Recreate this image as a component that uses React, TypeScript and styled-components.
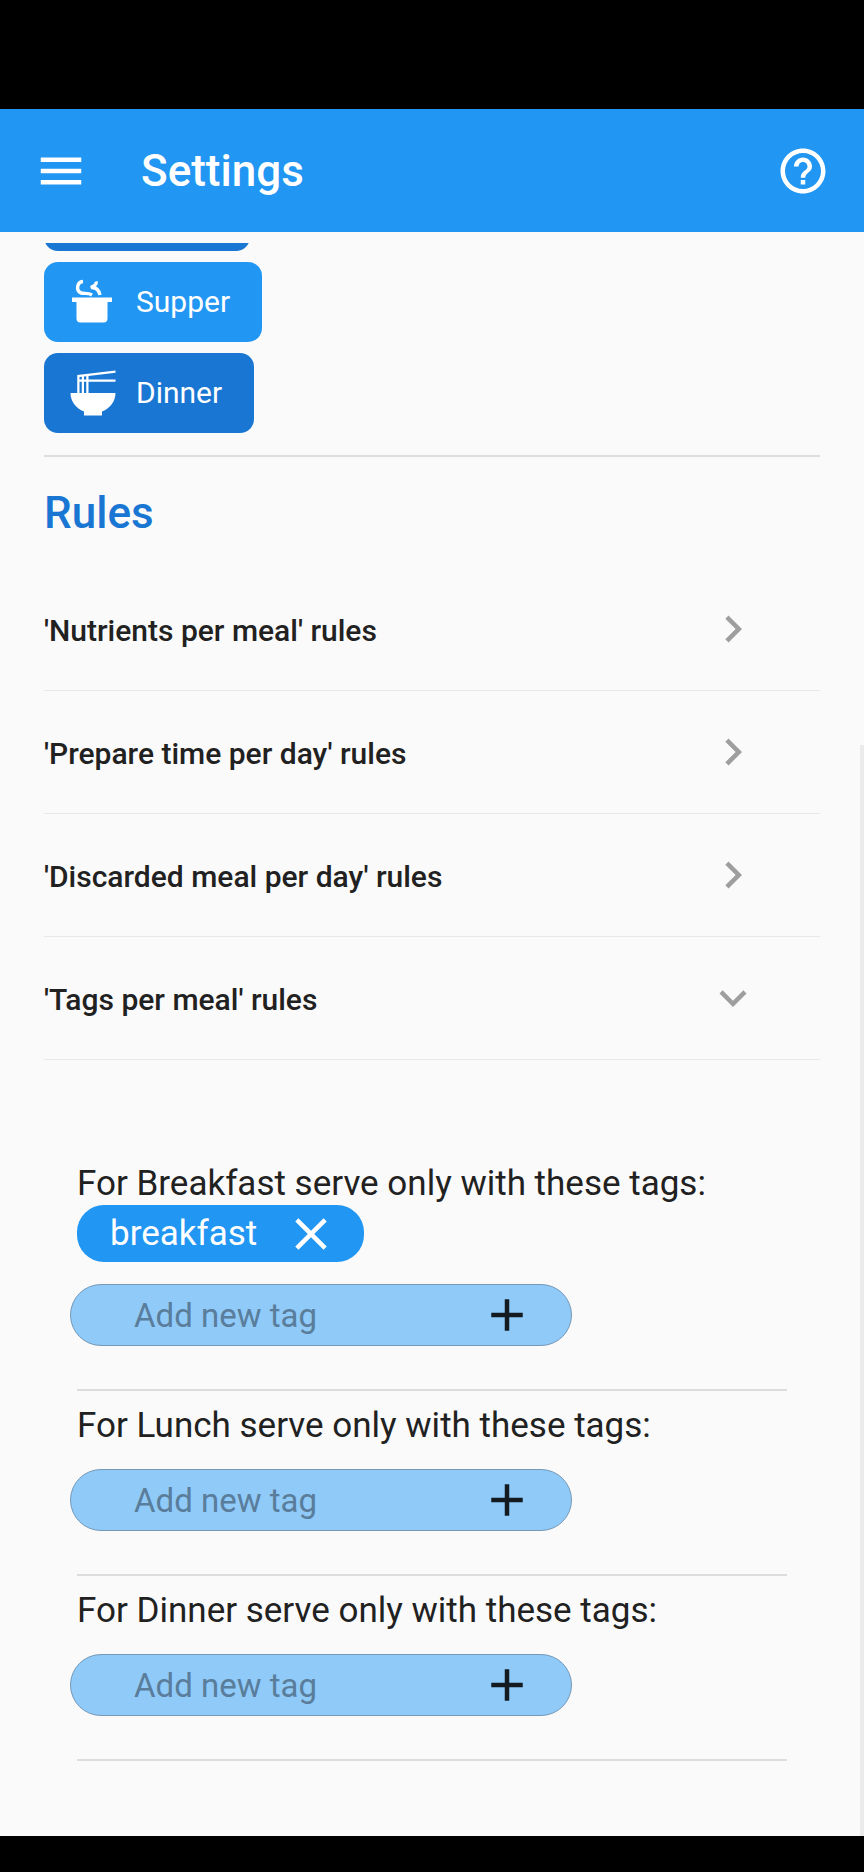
import React from 'react';
import styled, { createGlobalStyle } from 'styled-components';
import { MdMenu, MdHelpOutline, MdRamenDining, MdChevronRight, MdExpandMore, MdClose, MdAdd } from 'react-icons/md';

const GlobalStyle = createGlobalStyle`
  *, *::before, *::after { box-sizing: border-box; }
  body { margin: 0; background: #000; font-family: Roboto, sans-serif; color: #212121; }
  button, input { font: inherit; color: inherit; border: 0; margin: 0; padding: 0; background: none; }
  svg { display: block; flex: none; }
`;

const Screen = styled.div`
  display: flex;
  flex-direction: column;
  min-height: 100vh;
  padding: 109px 0 36px;
`;

const AppBar = styled.header`
  display: flex;
  align-items: center;
  height: 123px;
  padding: 0 34px;
  background: #2196f3;
  color: #fff;
`;

const IconButton = styled.button`
  display: flex;
  align-items: center;
  justify-content: center;
  width: 54px;
  height: 54px;
`;

const Title = styled.h1`
  flex: 1;
  margin: 0;
  padding-left: 53px;
  font-size: 44px;
  line-height: 54px;
  font-weight: 500;
`;

const Content = styled.main`
  position: relative;
  flex: 1;
  padding: 11px 44px 74px;
  background: #fafafa;
`;

const ScrollThumb = styled.div`
  position: absolute;
  right: 0;
  bottom: 0;
  width: 4px;
  height: 68%;
  background: #ebebeb;
`;

const MealList = styled.div`
  display: flex;
  flex-direction: column;
  align-items: flex-start;
  gap: 11px;
  padding-bottom: 22px;
  border-bottom: 2px solid #dedede;
`;

const ScrolledMeal = styled.div`
  display: flex;
  align-items: flex-end;
  height: 8px;
  overflow: hidden;

  &::before {
    content: '';
    width: 206px;
    height: 80px;
    border-radius: 14px;
    background: #1976d2;
  }
`;

const MealButton = styled.button<{ $dark?: boolean }>`
  display: flex;
  align-items: center;
  gap: 16px;
  height: 80px;
  padding: 0 32px 0 22px;
  border-radius: 14px;
  background: ${(p) => (p.$dark ? '#1976d2' : '#2196f3')};
  color: #fff;
  font-size: 30px;
  line-height: 36px;
`;

const RuleName = styled.span`
  padding-top: 4px;
`;

const SectionTitle = styled.h2`
  margin: 0;
  padding: 30px 0 28px;
  font-size: 44px;
  line-height: 53px;
  font-weight: 500;
  color: #1976d2;
`;

const RuleRow = styled.button`
  display: flex;
  align-items: center;
  justify-content: space-between;
  width: 100%;
  height: 123px;
  padding-right: 60px;
  border-bottom: 1px solid #e8e8e8;
  font-size: 30px;
  line-height: 36px;
  font-weight: 500;
  text-align: left;

  svg { color: #9e9e9e; }
`;

const TagRules = styled.div`
  padding: 89px 33px 0;
`;

const TagRule = styled.section`
  padding: 13px 0 43px;
  border-bottom: 2px solid #dcdcdc;
`;

const RuleLabel = styled.label`
  display: block;
  font-size: 35px;
  line-height: 43px;
`;

const Chip = styled.div`
  display: flex;
  align-items: center;
  gap: 27px;
  width: fit-content;
  height: 57px;
  padding: 0 26px 0 33px;
  border-radius: 27px;
  background: #2196f3;
  color: #fff;
  font-size: 35px;
  line-height: 43px;
`;

const TagField = styled.div`
  display: flex;
  align-items: center;
  width: 502px;
  max-width: 100%;
  height: 62px;
  margin: 22px 0 0 -7px;
  padding: 0 37px 0 63px;
  border: 1px solid #7699b6;
  border-radius: 31px;
  background: #90caf9;
  color: #131b21;
`;

const TagInput = styled.input`
  flex: 1;
  min-width: 0;
  padding-top: 2px;
  font-size: 33px;
  line-height: 40px;
  outline: none;

  &::placeholder { color: #597d9a; opacity: 1; }
`;

const PotIcon = () => (
  <svg width="54" height="54" viewBox="0 0 54 54" fill="none" aria-hidden="true">
    <path d="M6 22.500h40v4.500h-4.500v16.500a4 4 0 0 1-4 4h-23a4 4 0 0 1-4-4V27H6z" fill="#fff" />
    <path d="M17 6.500c-6 .5-7.500 9-2 11.500 3.500 1 7-.5 11 2" stroke="#fff" strokeWidth="3.400" />
    <path d="M30 6.500c1 4-2 4-5 6 5-.5 8 3 9 7.500" stroke="#fff" strokeWidth="3.400" />
  </svg>
);

const rules = [
  { name: "'Nutrients per meal' rules", open: false },
  { name: "'Prepare time per day' rules", open: false },
  { name: "'Discarded meal per day' rules", open: false },
  { name: "'Tags per meal' rules", open: true },
];

const tagRules = [
  { meal: 'Breakfast', tags: ['breakfast'] },
  { meal: 'Lunch', tags: [] },
  { meal: 'Dinner', tags: [] },
];

export default function App() {
  return (
    <>
      <GlobalStyle />
      <Screen>
        <AppBar>
          <IconButton aria-label="Menu"><MdMenu size={54} /></IconButton>
          <Title>Settings</Title>
          <IconButton aria-label="Help"><MdHelpOutline size={54} /></IconButton>
        </AppBar>
        <Content>
          <MealList>
            <ScrolledMeal />
            <MealButton><PotIcon />Supper</MealButton>
            <MealButton $dark><MdRamenDining size={54} />Dinner</MealButton>
          </MealList>
          <SectionTitle>Rules</SectionTitle>
          {rules.map((rule) => (
            <RuleRow key={rule.name} aria-expanded={rule.open}>
              <RuleName>{rule.name}</RuleName>
              {rule.open ? <MdExpandMore size={54} /> : <MdChevronRight size={54} />}
            </RuleRow>
          ))}
          <TagRules>
            {tagRules.map(({ meal, tags }) => (
              <TagRule key={meal}>
                <RuleLabel htmlFor={`tag-${meal}`}>For {meal} serve only with these tags:</RuleLabel>
                {tags.map((tag) => (
                  <Chip key={tag}>
                    {tag}
                    <IconButton aria-label={`Remove ${tag}`}><MdClose size={54} /></IconButton>
                  </Chip>
                ))}
                <TagField>
                  <TagInput id={`tag-${meal}`} placeholder="Add new tag" />
                  <IconButton aria-label={`Add tag for ${meal}`}><MdAdd size={54} /></IconButton>
                </TagField>
              </TagRule>
            ))}
          </TagRules>
          <ScrollThumb />
        </Content>
      </Screen>
    </>
  );
}
